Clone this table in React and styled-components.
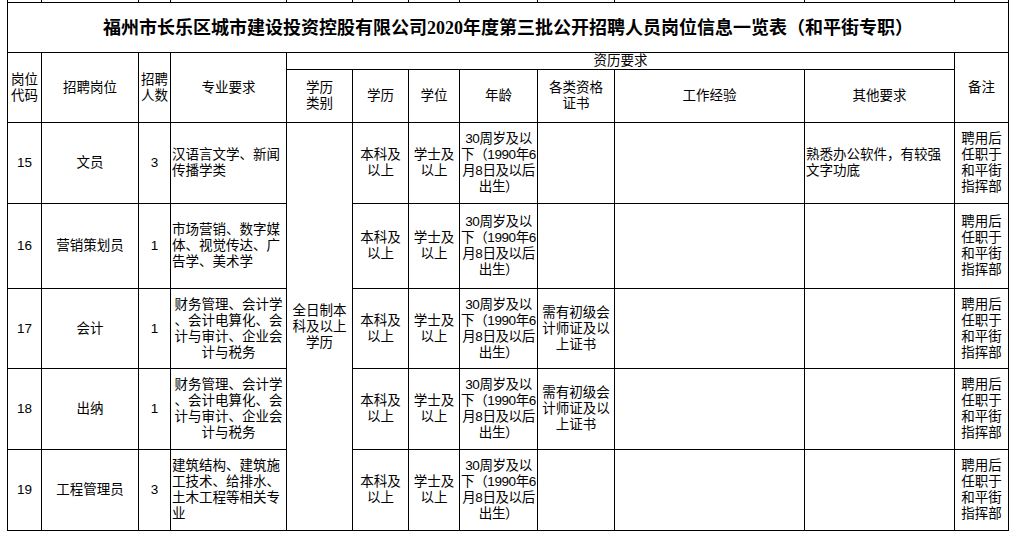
import React from "react";
import styled, { createGlobalStyle } from "styled-components";

const GlobalStyle = createGlobalStyle`
    html, body {
        margin: 0;
        padding: 0;
        background: #fff;
    }
    body {
        font-family: "Liberation Sans", "Noto Sans CJK SC", sans-serif;
        color: #000;
    }
`;

const Sheet = styled.div`
    padding-left: 7px;
`;

const Table = styled.table`
    border-collapse: collapse;
    table-layout: fixed;
    width: 1002px;
    font-size: 13.5px;
    line-height: 16px;
`;

const Row = styled.tr`
    height: ${(p) => p.$h}px;
`;

const Cell = styled.td`
    border: 1px solid #000;
    padding: ${(p) => (p.$tight ? "0" : "0 1px")};
    letter-spacing: ${(p) => (p.$tight ? "-0.4px" : "normal")};
    text-align: ${(p) => p.$align || "center"};
    vertical-align: middle;
    white-space: nowrap;
    overflow: hidden;
`;

const StripCell = styled.td`
    border: 1px solid #000;
    border-top: none;
    padding: 0;
    height: 2px;
`;

const TitleCell = styled.td`
    border: 1px solid #000;
    text-align: center;
    vertical-align: middle;
    font-family: "Liberation Serif", "Noto Sans CJK SC", serif;
    font-weight: bold;
    font-size: 18px;
    padding: 0;
`;

const Lines = ({ items }) => (
    <>
        {items.map((t, i) => (
            <React.Fragment key={i}>
                {i > 0 && <br />}
                {t}
            </React.Fragment>
        ))}
    </>
);

const widths = [34, 97, 32, 116, 66, 56, 51, 78, 77, 190, 150, 54];

const degree = ["本科及", "以上"];
const bachelor = ["学士及", "以上"];
const age = ["30周岁及以", "下（1990年6", "月8日及以后", "出生）"];
const note = ["聘用后", "任职于", "和平街", "指挥部"];
const finance = ["财务管理、会计学", "、会计电算化、会", "计与审计、企业会", "计与税务"];
const cert = ["需有初级会", "计师证及以", "上证书"];

const rows = [
    { code: "15", post: "文员", num: "3", major: ["汉语言文学、新闻", "传播学类"], align: "left", other: ["熟悉办公软件，有较强", "文字功底"], h: 81 },
    { code: "16", post: "营销策划员", num: "1", major: ["市场营销、数字媒", "体、视觉传达、广", "告学、美术学"], align: "left", h: 85 },
    { code: "17", post: "会计", num: "1", major: finance, align: "center", cert, h: 80 },
    { code: "18", post: "出纳", num: "1", major: finance, align: "center", cert, h: 81 },
    { code: "19", post: "工程管理员", num: "3", major: ["建筑结构、建筑施", "工技术、给排水、", "土木工程等相关专", "业"], align: "left", h: 81 },
];

export default function App() {
    return (
        <>
            <GlobalStyle />
            <Sheet>
                <Table>
                    <colgroup>
                        {widths.map((w, i) => (
                            <col key={i} style={{ width: w }} />
                        ))}
                    </colgroup>
                    <tbody>
                        <tr>
                            {widths.map((w, i) => (
                                <StripCell key={i} />
                            ))}
                        </tr>
                        <Row $h={50}>
                            <TitleCell colSpan={12}>
                                福州市长乐区城市建设投资控股有限公司2020年度第三批公开招聘人员岗位信息一览表（和平街专职）
                            </TitleCell>
                        </Row>
                        <Row $h={17}>
                            <Cell rowSpan={2}><Lines items={["岗位", "代码"]} /></Cell>
                            <Cell rowSpan={2}>招聘岗位</Cell>
                            <Cell rowSpan={2}><Lines items={["招聘", "人数"]} /></Cell>
                            <Cell rowSpan={2}>专业要求</Cell>
                            <Cell colSpan={7}>资历要求</Cell>
                            <Cell rowSpan={2}>备注</Cell>
                        </Row>
                        <Row $h={53}>
                            <Cell><Lines items={["学历", "类别"]} /></Cell>
                            <Cell>学历</Cell>
                            <Cell>学位</Cell>
                            <Cell>年龄</Cell>
                            <Cell><Lines items={["各类资格", "证书"]} /></Cell>
                            <Cell>工作经验</Cell>
                            <Cell>其他要求</Cell>
                        </Row>
                        {rows.map((r, i) => (
                            <Row key={r.code} $h={r.h}>
                                <Cell>{r.code}</Cell>
                                <Cell>{r.post}</Cell>
                                <Cell>{r.num}</Cell>
                                <Cell $align={r.align}><Lines items={r.major} /></Cell>
                                {i === 0 && (
                                    <Cell rowSpan={5}><Lines items={["全日制本", "科及以上", "学历"]} /></Cell>
                                )}
                                <Cell><Lines items={degree} /></Cell>
                                <Cell><Lines items={bachelor} /></Cell>
                                <Cell $tight><Lines items={age} /></Cell>
                                <Cell>{r.cert && <Lines items={r.cert} />}</Cell>
                                <Cell />
                                <Cell $align="left">{r.other && <Lines items={r.other} />}</Cell>
                                <Cell><Lines items={note} /></Cell>
                            </Row>
                        ))}
                    </tbody>
                </Table>
            </Sheet>
        </>
    );
}
